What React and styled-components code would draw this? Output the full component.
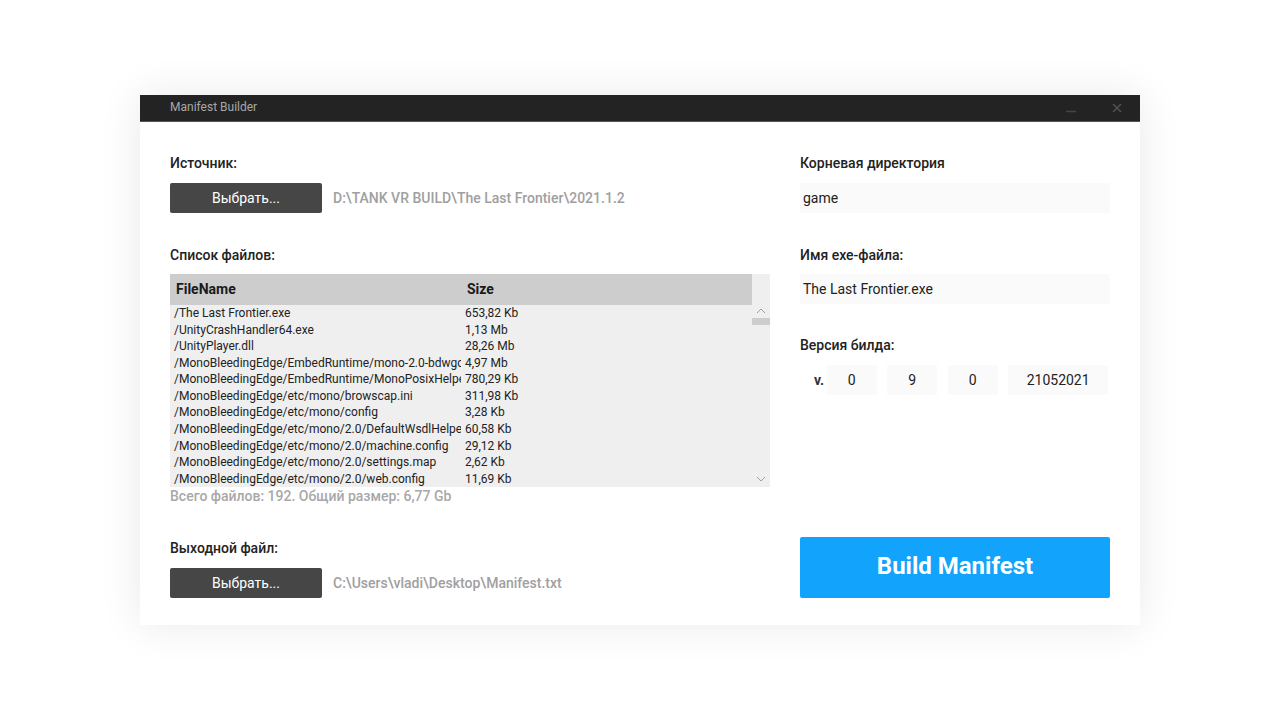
import React from "react";
import styled, { createGlobalStyle } from "styled-components";

const Global = createGlobalStyle`
  html, body { margin: 0; padding: 0; background: #ffffff; }
  body { font-family: Roboto, "Noto Sans", "Liberation Sans", sans-serif; }
  * { box-sizing: border-box; }
`;

const Page = styled.div`
  width: 1280px;
  height: 720px;
  padding: 95px 0 0 140px;
`;

const Window = styled.div`
  width: 1000px;
  height: 530px;
  background: #ffffff;
  box-shadow: 0 0 40px rgba(0, 0, 0, 0.09);
  display: flex;
  flex-direction: column;
`;

const TitleBar = styled.div`
  height: 27px;
  background: #232323;
  border-bottom: 1px solid #555;
  display: flex;
  align-items: center;
  padding: 0 0 0 30px;
`;

const Title = styled.div`
  flex: 1;
  font-size: 12px;
  color: #a8a8a8;
  line-height: 14px;
  padding-bottom: 3px;
`;

const WinBtn = styled.div`
  width: 46px;
  height: 26px;
  display: flex;
  align-items: center;
  justify-content: center;
`;

const Content = styled.div`
  flex: 1;
  display: flex;
  gap: 30px;
  padding: 33px 30px 27px 30px;
`;

const LeftCol = styled.div`
  width: 600px;
  display: flex;
  flex-direction: column;
`;

const RightCol = styled.div`
  width: 310px;
  display: flex;
  flex-direction: column;
`;

const Label = styled.div`
  font-size: 14px;
  line-height: 16px;
  font-weight: 500;
  color: #222;
  margin-top: ${(p) => p.$mt || 0}px;
`;

const PickRow = styled.div`
  display: flex;
  align-items: center;
  gap: 11px;
  margin-top: 12px;
`;

const PickButton = styled.button`
  width: 152px;
  height: 30px;
  border: none;
  border-radius: 2px;
  background: #464646;
  color: #fff;
  font-family: inherit;
  font-size: 14px;
  padding: 0;
`;

const PathText = styled.div`
  font-size: 14px;
  font-weight: 500;
  color: #a0a0a0;
`;

const TableWrap = styled.div`
  margin-top: 11px;
  height: 213px;
  background: #efefef;
  display: flex;
`;

const TableMain = styled.div`
  width: 582px;
  display: flex;
  flex-direction: column;
`;

const HeadRow = styled.div`
  height: 31px;
  background: #cdcdcd;
  display: grid;
  grid-template-columns: 291px 1fr;
  align-items: center;
  font-size: 14px;
  font-weight: 700;
  color: #1a1a1a;
`;

const HeadCell = styled.div`
  padding-left: 6px;
`;

const Row = styled.div`
  height: 16.6px;
  display: grid;
  grid-template-columns: 291px 1fr;
  align-items: center;
  font-size: 12px;
  color: #222;
`;

const Cell = styled.div`
  padding-left: 4px;
  white-space: nowrap;
  overflow: hidden;
  line-height: 14px;
`;

const ScrollCol = styled.div`
  width: 18px;
  display: flex;
  flex-direction: column;
  align-items: center;
  padding-top: 34px;
`;

const Thumb = styled.div`
  width: 18px;
  height: 7px;
  background: #cdcdcd;
  margin-top: 4px;
`;

const ScrollSpacer = styled.div`
  flex: 1;
`;

const ScrollFoot = styled.div`
  height: 5px;
`;

const Summary = styled.div`
  margin-top: 1px;
  font-size: 14px;
  line-height: 16px;
  font-weight: 500;
  color: #a8a8a8;
`;

const Input = styled.div`
  margin-top: ${(p) => p.$mt || 12}px;
  height: 30px;
  background: #fafafa;
  display: flex;
  align-items: center;
  padding-left: 3px;
  font-size: 14px;
  color: #222;
`;

const VersionRow = styled.div`
  margin-top: 12px;
  height: 30px;
  display: flex;
  align-items: center;
  gap: 10.5px;
`;

const VPrefix = styled.div`
  font-size: 14px;
  font-weight: 700;
  color: #333;
  padding-left: 14px;
  margin-right: -8px;
`;

const VBox = styled.div`
  width: ${(p) => p.$w}px;
  height: 30px;
  background: #fafafa;
  display: flex;
  align-items: center;
  justify-content: center;
  font-size: 14px;
  color: #222;
`;

const BuildButton = styled.button`
  margin-top: auto;
  width: 310px;
  height: 61px;
  border: none;
  border-radius: 2px;
  background: #12a4fc;
  color: #fff;
  font-family: inherit;
  font-size: 24px;
  font-weight: 700;
  padding: 0 0 3px 0;
`;

const Chevron = ({ up }) => (
  <svg width="10" height="6" viewBox="0 0 10 6">
    <path
      d={up ? "M1 5 L5 1 L9 5" : "M1 1 L5 5 L9 1"}
      fill="none"
      stroke="#a0a0a0"
      strokeWidth="1"
    />
  </svg>
);

const files = [
  ["/The Last Frontier.exe", "653,82 Kb"],
  ["/UnityCrashHandler64.exe", "1,13 Mb"],
  ["/UnityPlayer.dll", "28,26 Mb"],
  ["/MonoBleedingEdge/EmbedRuntime/mono-2.0-bdwgc.dll", "4,97 Mb"],
  ["/MonoBleedingEdge/EmbedRuntime/MonoPosixHelper.dll", "780,29 Kb"],
  ["/MonoBleedingEdge/etc/mono/browscap.ini", "311,98 Kb"],
  ["/MonoBleedingEdge/etc/mono/config", "3,28 Kb"],
  ["/MonoBleedingEdge/etc/mono/2.0/DefaultWsdlHelperGenerator.aspx", "60,58 Kb"],
  ["/MonoBleedingEdge/etc/mono/2.0/machine.config", "29,12 Kb"],
  ["/MonoBleedingEdge/etc/mono/2.0/settings.map", "2,62 Kb"],
  ["/MonoBleedingEdge/etc/mono/2.0/web.config", "11,69 Kb"],
];

export default function App() {
  return (
    <Page>
      <Global />
      <Window>
        <TitleBar>
          <Title>Manifest Builder</Title>
          <WinBtn>
            <svg width="10" height="10" viewBox="0 0 10 10">
              <path d="M0 8.5 H10" stroke="#444" strokeWidth="1.5" />
            </svg>
          </WinBtn>
          <WinBtn>
            <svg width="10" height="10" viewBox="0 0 10 10">
              <path d="M1 1 L9 9 M9 1 L1 9" stroke="#555" strokeWidth="1.3" />
            </svg>
          </WinBtn>
        </TitleBar>
        <Content>
          <LeftCol>
            <Label>Источник:</Label>
            <PickRow>
              <PickButton>Выбрать...</PickButton>
              <PathText>D:\TANK VR BUILD\The Last Frontier\2021.1.2</PathText>
            </PickRow>
            <Label $mt={34}>Список файлов:</Label>
            <TableWrap>
              <TableMain>
                <HeadRow>
                  <HeadCell>FileName</HeadCell>
                  <HeadCell>Size</HeadCell>
                </HeadRow>
                {files.map(([n, s]) => (
                  <Row key={n}>
                    <Cell>{n}</Cell>
                    <Cell>{s}</Cell>
                  </Row>
                ))}
              </TableMain>
              <ScrollCol>
                <Chevron up />
                <Thumb />
                <ScrollSpacer />
                <Chevron />
                <ScrollFoot />
              </ScrollCol>
            </TableWrap>
            <Summary>Всего файлов: 192. Общий размер: 6,77 Gb</Summary>
            <Label $mt={36}>Выходной файл:</Label>
            <PickRow>
              <PickButton>Выбрать...</PickButton>
              <PathText>C:\Users\vladi\Desktop\Manifest.txt</PathText>
            </PickRow>
          </LeftCol>
          <RightCol>
            <Label>Корневая директория</Label>
            <Input>game</Input>
            <Label $mt={34}>Имя exe-файла:</Label>
            <Input $mt={11}>The Last Frontier.exe</Input>
            <Label $mt={33}>Версия билда:</Label>
            <VersionRow>
              <VPrefix>v.</VPrefix>
              <VBox $w={50}>0</VBox>
              <VBox $w={50}>9</VBox>
              <VBox $w={50}>0</VBox>
              <VBox $w={100}>21052021</VBox>
            </VersionRow>
            <BuildButton>Build Manifest</BuildButton>
          </RightCol>
        </Content>
      </Window>
    </Page>
  );
}
